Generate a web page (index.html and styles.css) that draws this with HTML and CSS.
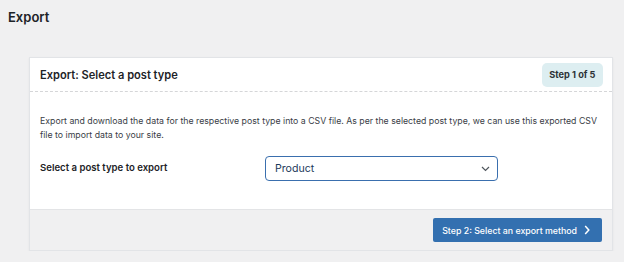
FILE: index.html
```html
<!DOCTYPE html>
<html>
<head>
<meta charset="utf-8">
<link rel="stylesheet" href="styles.css">
</head>
<body>
<h1 class="page-title">Export</h1>
<div class="card">
  <div class="card-header">
    <h2 class="card-title">Export: Select a post type</h2>
    <span class="badge">Step 1 of 5</span>
  </div>
  <div class="card-body">
    <p class="desc">Export and download the data for the respective post type into a CSV file. As per the selected post type, we can use this exported CSV file to import data to your site.</p>
    <div class="field-row">
      <label class="field-label">Select a post type to export</label>
      <div class="select">
        <span class="select-value">Product</span>
        <svg class="select-chevron" width="9" height="6" viewBox="0 0 9 6"><path d="M1 1l3.5 3.5 3.5-3.5" fill="none" stroke="#50575e" stroke-width="1.2"/></svg>
      </div>
    </div>
  </div>
  <div class="card-footer">
    <button class="btn-primary">Step 2: Select an export method
      <svg class="btn-chevron" width="6" height="10" viewBox="0 0 6 10"><path d="M1.2 1l3.6 4-3.6 4" fill="none" stroke="#fff" stroke-width="1.5"/></svg>
    </button>
  </div>
</div>
</body>
</html>
```
FILE: styles.css
```css
html, body {
  margin: 0;
  padding: 0;
  background: #f0f0f1;
  font-family: Inter, "Noto Sans", sans-serif;
  color: #1d2327;
}
.page-title {
  margin: 0;
  padding: 7px 0 0 8px;
  font-size: 13px;
  font-weight: 600;
  line-height: 20px;
  color: #1d2327;
}
.card {
  margin: 30px 0 0 29px;
  width: 582px;
  background: #fff;
  border: 1px solid #e2e4e7;
  box-shadow: 0 1px 2px rgba(0,0,0,0.06);
}
.card-header {
  display: flex;
  align-items: center;
  justify-content: space-between;
  height: 33px;
  padding: 0 9px 0 10px;
  border-bottom: 1px dashed #d5d6d8;
}
.card-title {
  margin: 0;
  font-size: 11.1px;
  font-weight: 600;
  color: #1d2327;
}
.badge {
  background: #ddeef1;
  border-radius: 5px;
  padding: 0 7.5px;
  height: 24px;
  line-height: 24px;
  font-size: 9.2px;
  font-weight: 700;
  color: #2c3338;
  margin-top: 1px;
}
.card-body {
  padding: 22px 10px 0 10px;
  height: 117px;
  box-sizing: border-box;
}
.desc {
  margin: 0;
  font-size: 8.75px;
  line-height: 14px;
  color: #3a4046;
}
.field-row {
  display: flex;
  align-items: flex-start;
  margin-top: 14px;
}
.field-label {
  width: 225px;
  flex-shrink: 0;
  font-size: 9.6px;
  font-weight: 600;
  line-height: 14px;
  padding-top: 5px;
  color: #1d2327;
}
.select {
  box-sizing: border-box;
  display: flex;
  align-items: center;
  justify-content: space-between;
  width: 233px;
  height: 25px;
  border: 1.5px solid #3a6fae;
  border-radius: 4px;
  padding: 0 7px 0 9px;
  font-size: 10.6px;
  color: #1d3a5c;
}
.card-footer {
  display: flex;
  justify-content: flex-end;
  background: #f0f0f1;
  border-top: 1px solid #e3e4e6;
  padding: 8px 10px 8px 0;
}
.btn-primary {
  display: flex;
  align-items: center;
  gap: 7px;
  height: 24px;
  padding: 0 12px 0 9px;
  background: #3370b0;
  border: none;
  border-radius: 2px;
  color: #fff;
  font-family: Inter, "Noto Sans", sans-serif;
  font-size: 8.8px;
  font-weight: 500;
}
```
